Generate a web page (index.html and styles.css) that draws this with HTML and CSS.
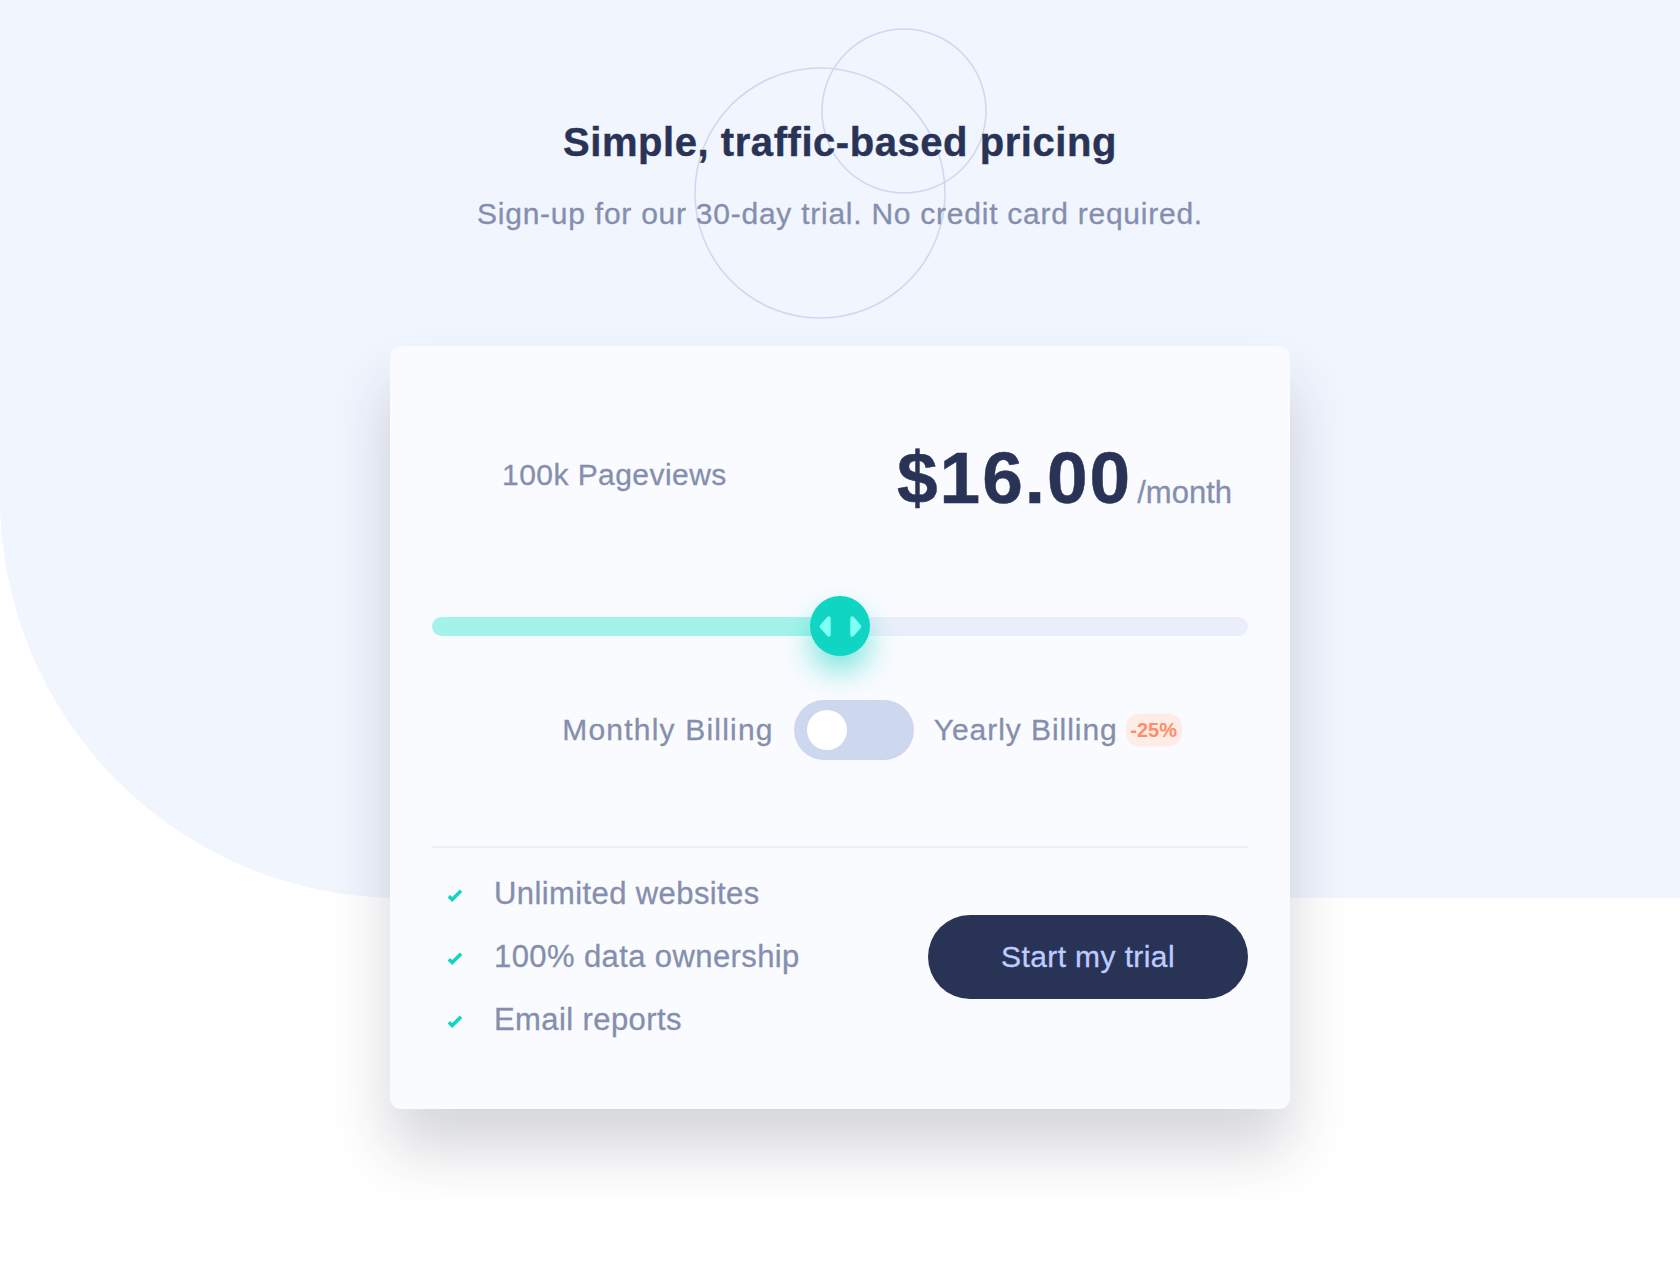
FILE: index.html
```html
<!DOCTYPE html>
<html lang="en">
<head>
<meta charset="utf-8">
<title>Pricing</title>
<link rel="stylesheet" href="styles.css">
</head>
<body>
<div class="page">
  <div class="bg-shape">
    <svg class="pattern" width="300" height="300" viewBox="0 0 300 300" aria-hidden="true">
      <circle cx="130" cy="169" r="125" fill="none" stroke="#cfd8ef" stroke-width="1.6"/>
      <circle cx="214" cy="87" r="82" fill="none" stroke="#cfd8ef" stroke-width="1.6"/>
    </svg>
  </div>
  <header class="intro">
    <h1 class="title">Simple, traffic-based pricing</h1>
    <p class="subtitle">Sign-up for our 30-day trial. No credit card required.</p>
  </header>
  <main class="card">
    <div class="card-head">
      <span class="pageviews">100k Pageviews</span>
      <div class="price"><span class="amount">$16.00</span><span class="period">/month</span></div>
    </div>
    <div class="slider">
      <div class="track"><div class="fill" style="width:50%"></div></div>
      <div class="thumb" style="left:50%">
        <svg width="43" height="27" viewBox="0 0 22 13" preserveAspectRatio="none" aria-hidden="true"><g fill="#80FFF3" fill-rule="evenodd"><path d="M16 2.558v7.884a1 1 0 001.735.679l3.639-3.943a1 1 0 000-1.356l-3.64-3.943A1 1 0 0016 2.558zM6 2.558v7.884a1 1 0 01-1.735.679L.626 7.178a1 1 0 010-1.356l3.64-3.943A1 1 0 016 2.558z"/></g></svg>
      </div>
    </div>
    <div class="billing">
      <span class="billing-label">Monthly Billing</span>
      <span class="toggle"><span class="knob"></span></span>
      <span class="billing-label yearly">Yearly Billing<span class="badge">-25%</span></span>
    </div>
    <hr class="divider">
    <div class="card-foot">
      <ul class="features">
        <li><svg class="check" width="16" height="14" viewBox="0 0 9 8" aria-hidden="true"><path fill="none" stroke="#10D5C2" stroke-width="2" d="M1 4.134l1.907 1.908L7.949 1"/></svg>Unlimited websites</li>
        <li><svg class="check" width="16" height="14" viewBox="0 0 9 8" aria-hidden="true"><path fill="none" stroke="#10D5C2" stroke-width="2" d="M1 4.134l1.907 1.908L7.949 1"/></svg>100% data ownership</li>
        <li><svg class="check" width="16" height="14" viewBox="0 0 9 8" aria-hidden="true"><path fill="none" stroke="#10D5C2" stroke-width="2" d="M1 4.134l1.907 1.908L7.949 1"/></svg>Email reports</li>
      </ul>
      <button class="cta" type="button">Start my trial</button>
    </div>
  </main>
</div>
</body>
</html>
```

FILE: styles.css
```css
* { box-sizing: border-box; }

html, body {
  margin: 0;
  padding: 0;
  background: #ffffff;
}

body {
  font-family: "Liberation Sans", Arial, sans-serif;
  color: #858fad;
  min-height: 1280px;
}

.page {
  position: relative;
  min-height: 1280px;
}

.bg-shape {
  position: absolute;
  top: 0;
  left: 0;
  width: 100%;
  height: 898px;
  background: #f1f5fe;
  border-bottom-left-radius: 400px;
  z-index: 0;
}

.pattern {
  position: absolute;
  top: 24px;
  left: calc(50% - 150px);
}

.intro {
  position: relative;
  z-index: 1;
  text-align: center;
  padding-top: 120px;
}

.title {
  margin: 0;
  font-size: 40px;
  line-height: 44px;
  font-weight: 700;
  letter-spacing: 0.55px;
  color: #293356;
  -webkit-text-stroke: 0.4px #293356;
}

.subtitle {
  margin: 33px 0 0;
  font-size: 30px;
  line-height: 34px;
  letter-spacing: 0.75px;
  color: #858fad;
  -webkit-text-stroke: 0.3px #858fad;
}

.card {
  position: relative;
  z-index: 1;
  width: 900px;
  margin: 115px auto 0;
  padding: 94px 42px 58px;
  background: #f9fbff;
  border-radius: 11px;
  box-shadow: 0 40px 60px rgba(30, 36, 60, 0.19);
}

.card-head {
  display: flex;
  justify-content: space-between;
  align-items: flex-start;
  padding: 0 16px 0 70px;
}

.pageviews {
  margin-top: 17px;
  font-size: 30px;
  line-height: 36px;
  letter-spacing: 0.45px;
  color: #858fad;
  -webkit-text-stroke: 0.3px #858fad;
}

.price {
  display: flex;
  align-items: baseline;
  height: 76px;
  font-size: 73px;
  line-height: 76px;
}

.amount {
  font-weight: 700;
  letter-spacing: 2px;
  color: #293356;
  -webkit-text-stroke: 0.5px #293356;
}

.period {
  margin-left: 5px;
  font-size: 31px;
  line-height: 1;
  color: #858fad;
  -webkit-text-stroke: 0.3px #858fad;
}

.slider {
  position: relative;
  margin-top: 80px;
  height: 60px;
  display: flex;
  align-items: center;
}

.track {
  width: 100%;
  height: 19px;
  border-radius: 10px;
  background: #eaeefb;
  overflow: hidden;
}

.fill {
  height: 100%;
  background: #a4f3eb;
  border-radius: 10px 0 0 10px;
}

.thumb {
  position: absolute;
  top: 0;
  width: 60px;
  height: 60px;
  margin-left: -30px;
  border-radius: 50%;
  background: #10d5c2;
  box-shadow: 0 16px 28px rgba(16, 213, 194, 0.5);
  display: flex;
  align-items: center;
  justify-content: center;
}

.billing {
  margin-top: 44px;
  height: 60px;
  display: flex;
  align-items: center;
  justify-content: center;
  gap: 20px;
}

.billing-label {
  font-size: 30px;
  line-height: 36px;
  letter-spacing: 1.2px;
  color: #858fad;
  -webkit-text-stroke: 0.3px #858fad;
}

.yearly {
  position: relative;
  letter-spacing: 0.95px;
}

.badge {
  position: absolute;
  left: calc(100% + 8px);
  top: 50%;
  transform: translateY(-50%);
  width: 56px;
  height: 33px;
  border-radius: 14px;
  background: #feece7;
  color: #ff8d68;
  font-size: 20px;
  line-height: 33px;
  font-weight: 700;
  letter-spacing: 0;
  text-align: center;
  -webkit-text-stroke: 0;
}

.toggle {
  width: 120px;
  height: 60px;
  border-radius: 30px;
  background: #cdd7ee;
  padding: 10px 13px;
  display: flex;
}

.knob {
  width: 40px;
  height: 40px;
  border-radius: 50%;
  background: #ffffff;
}

.divider {
  margin: 86px 0 0;
  border: 0;
  height: 2px;
  background: #eceff9;
}

.card-foot {
  margin-top: 14px;
  display: flex;
  justify-content: space-between;
  align-items: center;
}

.features {
  list-style: none;
  margin: 0;
  padding: 0 0 0 15px;
}

.features li {
  height: 63px;
  display: flex;
  align-items: center;
  font-size: 31px;
  letter-spacing: 0.4px;
  color: #858fad;
  -webkit-text-stroke: 0.3px #858fad;
}

.check {
  margin-right: 31px;
  margin-top: 5px;
  flex: none;
}

.cta {
  width: 320px;
  height: 84px;
  border: 0;
  border-radius: 42px;
  background: #293356;
  color: #bdccff;
  font-family: "Liberation Sans", Arial, sans-serif;
  font-size: 30px;
  letter-spacing: 0.4px;
  padding: 0;
  -webkit-text-stroke: 0.3px #bdccff;
}
```
